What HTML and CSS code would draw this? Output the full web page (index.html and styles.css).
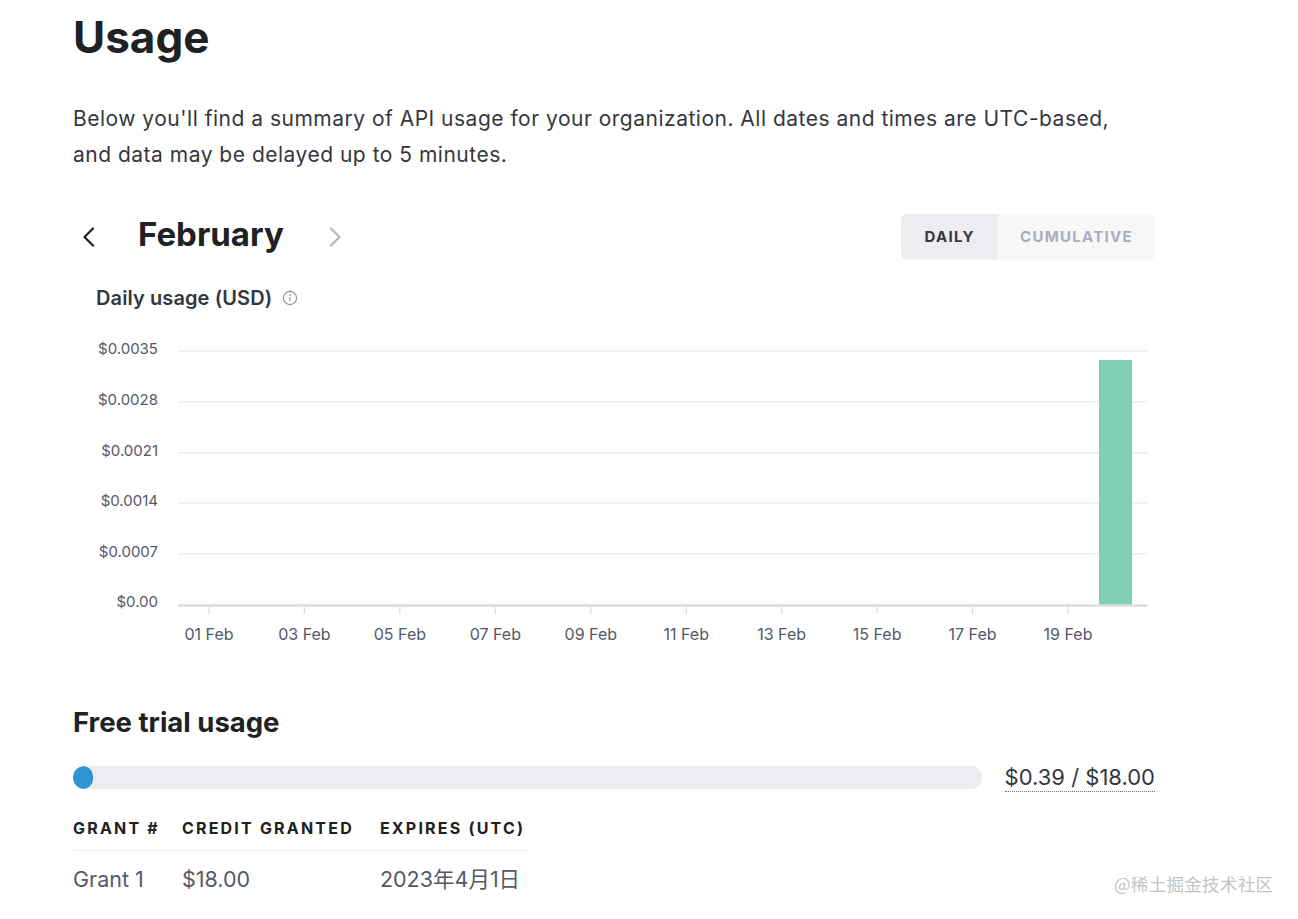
FILE: index.html
```html
<!DOCTYPE html>
<html lang="en">
<head>
<meta charset="utf-8">
<title>Usage</title>
<link rel="stylesheet" href="styles.css">
</head>
<body>
<main class="page">
  <h1 class="title">Usage</h1>
  <p class="intro">Below you'll find a summary of API usage for your organization. All dates and times are UTC-based, and data may be delayed up to 5 minutes.</p>

  <div class="month-row">
    <div class="month-nav">
      <button class="chev chev-prev" aria-label="Previous month">
        <svg width="14" height="20" viewBox="0 0 14 20"><polyline points="11,1.5 2.5,10 11,18.5" fill="none" stroke="#202123" stroke-width="2.2" stroke-linecap="round" stroke-linejoin="round"/></svg>
      </button>
      <h2 class="month">February</h2>
      <button class="chev chev-next" aria-label="Next month">
        <svg width="14" height="20" viewBox="0 0 14 20"><polyline points="3,1.5 11.5,10 3,18.5" fill="none" stroke="#b8b8c0" stroke-width="2.2" stroke-linecap="round" stroke-linejoin="round"/></svg>
      </button>
    </div>
    <div class="toggle">
      <button class="seg seg-active">Daily</button>
      <button class="seg">Cumulative</button>
    </div>
  </div>

  <div class="chart-title">
    <span>Daily usage (USD)</span>
    <svg class="info" width="16" height="16" viewBox="0 0 16 16"><circle cx="8" cy="8" r="6.6" fill="none" stroke="#8e8ea0" stroke-width="1.1"/><circle cx="8" cy="5.1" r="0.85" fill="#8e8ea0"/><line x1="8" y1="7.2" x2="8" y2="11.4" stroke="#8e8ea0" stroke-width="1.2"/></svg>
  </div>

  <svg class="chart" width="1082" height="320" viewBox="0 0 1082 320">
    <g class="grid">
      <line x1="105" y1="21" x2="1074" y2="21"/>
      <line x1="105" y1="72" x2="1074" y2="72"/>
      <line x1="105" y1="123" x2="1074" y2="123"/>
      <line x1="105" y1="173" x2="1074" y2="173"/>
      <line x1="105" y1="224" x2="1074" y2="224"/>
    </g>
    <g class="ylabels">
      <text x="85" y="20">$0.0035</text>
      <text x="85" y="71">$0.0028</text>
      <text x="85" y="122">$0.0021</text>
      <text x="85" y="172">$0.0014</text>
      <text x="85" y="223">$0.0007</text>
      <text x="85" y="273">$0.00</text>
    </g>
    <rect class="bar" x="1026" y="30" width="33" height="245"/>
    <line class="axis" x1="105" y1="275.5" x2="1074" y2="275.5"/>
    <g class="ticks">
      <line x1="136" y1="277" x2="136" y2="284"/>
      <line x1="231.4" y1="277" x2="231.4" y2="284"/>
      <line x1="326.9" y1="277" x2="326.9" y2="284"/>
      <line x1="422.3" y1="277" x2="422.3" y2="284"/>
      <line x1="517.8" y1="277" x2="517.8" y2="284"/>
      <line x1="613.2" y1="277" x2="613.2" y2="284"/>
      <line x1="708.6" y1="277" x2="708.6" y2="284"/>
      <line x1="804.1" y1="277" x2="804.1" y2="284"/>
      <line x1="899.5" y1="277" x2="899.5" y2="284"/>
      <line x1="995" y1="277" x2="995" y2="284"/>
    </g>
    <g class="xlabels">
      <text x="136" y="306">01 Feb</text>
      <text x="231.4" y="306">03 Feb</text>
      <text x="326.9" y="306">05 Feb</text>
      <text x="422.3" y="306">07 Feb</text>
      <text x="517.8" y="306">09 Feb</text>
      <text x="613.2" y="306">11 Feb</text>
      <text x="708.6" y="306">13 Feb</text>
      <text x="804.1" y="306">15 Feb</text>
      <text x="899.5" y="306">17 Feb</text>
      <text x="995" y="306">19 Feb</text>
    </g>
  </svg>

  <h2 class="section-title">Free trial usage</h2>
  <div class="progress-row">
    <div class="progress"><div class="progress-fill" style="width: 2.2%"></div></div>
    <span class="amount">$0.39 / $18.00</span>
  </div>

  <table class="grants">
    <thead>
      <tr><th class="col-grant">Grant #</th><th class="col-credit">Credit granted</th><th>Expires (UTC)</th></tr>
    </thead>
    <tbody>
      <tr><td class="col-grant">Grant 1</td><td>$18.00</td><td>2023年4月1日</td></tr>
    </tbody>
  </table>
</main>
<div class="watermark">@稀土掘金技术社区</div>
</body>
</html>
```

FILE: styles.css
```css
html, body {
  margin: 0;
  padding: 0;
  background: #ffffff;
}

body {
  font-family: Inter, "Noto Sans", "Noto Sans CJK SC", sans-serif;
  color: #353740;
  height: 919px;
  overflow: hidden;
  position: relative;
}

.page {
  width: 1082px;
  padding-left: 73px;
}

.title {
  margin: 11px 0 0;
  font-size: 44px;
  font-weight: 700;
  line-height: 52px;
  color: #202123;
}

.intro {
  margin: 38px 0 0;
  font-size: 21px;
  line-height: 36px;
  letter-spacing: 0.5px;
  color: #353740;
  max-width: 1060px;
}

.month-row {
  margin-top: 41px;
  height: 45px;
  display: flex;
  align-items: center;
  justify-content: space-between;
}

.month-nav {
  display: flex;
  align-items: center;
  padding-bottom: 5px;
}

.chev {
  border: 0;
  background: none;
  padding: 0;
  width: 14px;
  height: 20px;
  display: flex;
  cursor: pointer;
}

.chev-prev {
  margin-left: 9px;
  margin-right: 42px;
  margin-top: 5px;
}

.chev-next {
  margin-left: 44px;
  margin-top: 5px;
}

.month {
  margin: 0;
  font-size: 33px;
  font-weight: 700;
  line-height: 40px;
  color: #202123;
}

.toggle {
  display: flex;
  height: 45px;
  border-radius: 6px;
  background: #f7f7f8;
  overflow: hidden;
  box-shadow: 0 1px 2px rgba(0, 0, 0, 0.04);
}

.seg {
  border: 0;
  background: transparent;
  font-family: Inter, sans-serif;
  font-size: 15px;
  font-weight: 700;
  letter-spacing: 1.3px;
  text-transform: uppercase;
  color: #acacbe;
  padding: 0 22px;
  cursor: pointer;
}

.seg-active {
  background: #ececf1;
  color: #353740;
  width: 97px;
  padding: 0;
}

.chart-title {
  margin-top: 27px;
  margin-left: 23px;
  display: flex;
  align-items: center;
  gap: 10px;
  font-size: 20px;
  font-weight: 600;
  line-height: 24px;
  letter-spacing: 0.1px;
  color: #353740;
}

.chart {
  display: block;
  margin-top: 20px;
  font-family: Inter, sans-serif;
}

.grid line {
  stroke: #e3e3e6;
  stroke-width: 1.2;
}

.axis {
  stroke: #dcdce0;
  stroke-width: 2.5;
}

.ticks line {
  stroke: #dcdce0;
  stroke-width: 1.2;
}

.ylabels text {
  font-size: 15px;
  fill: #565869;
  text-anchor: end;
  dominant-baseline: middle;
}

.xlabels text {
  font-size: 16px;
  fill: #565869;
  text-anchor: middle;
  dominant-baseline: middle;
}

.bar {
  fill: #7fcfb6;
}

.section-title {
  margin: 57px 0 0;
  font-size: 27.5px;
  font-weight: 700;
  line-height: 31px;
  color: #202123;
}

.progress-row {
  margin-top: 25px;
  display: flex;
  align-items: center;
  gap: 23px;
}

.progress {
  flex: 1;
  height: 23px;
  border-radius: 12px;
  background: #ececf1;
  overflow: hidden;
}

.progress-fill {
  height: 100%;
  min-width: 20px;
  border-radius: 12px;
  background: #2e95d3;
}

.amount {
  font-size: 22px;
  line-height: 27px;
  padding-top: 1px;
  color: #353740;
  border-bottom: 1px dotted #6e6e80;
  white-space: nowrap;
}

.grants {
  margin-top: 26px;
  border-collapse: collapse;
}

.grants th {
  text-align: left;
  font-size: 16px;
  font-weight: 700;
  letter-spacing: 2.2px;
  text-transform: uppercase;
  line-height: 20px;
  color: #202123;
  padding: 0 24px 12px 0;
  border-bottom: 1px solid #ececf1;
  white-space: nowrap;
}

.grants .col-grant {
  padding-right: 22px;
}

.grants .col-credit {
  width: 174px;
}

.grants th:last-child,
.grants td:last-child {
  padding-right: 4px;
}

.grants td {
  font-size: 21.5px;
  line-height: 28px;
  color: #565869;
  padding: 14px 24px 0 0;
  white-space: nowrap;
}

.watermark {
  position: absolute;
  left: 1114px;
  top: 872px;
  font-family: "Noto Sans CJK SC", sans-serif;
  font-size: 17.5px;
  line-height: 24px;
  color: #c4c4c4;
  letter-spacing: 0.3px;
}
```
